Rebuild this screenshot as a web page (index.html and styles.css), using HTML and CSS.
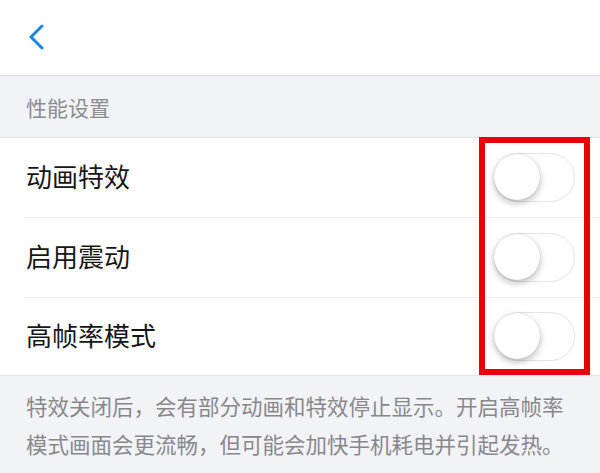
FILE: index.html
```html
<!DOCTYPE html>
<html lang="zh">
<head>
<meta charset="utf-8">
<link rel="stylesheet" href="styles.css">
</head>
<body>
<div class="page">
  <header class="nav">
    <svg class="back" width="18" height="26" viewBox="0 0 18 26"><path d="M15 2 L4 13 L15 24" fill="none" stroke="#1f86dc" stroke-width="3" stroke-linecap="round" stroke-linejoin="round"/></svg>
  </header>
  <div class="section-title">性能设置</div>
  <div class="list">
    <div class="row"><span class="label">动画特效</span><span class="toggle"><span class="knob"></span></span></div>
    <div class="row"><span class="label">启用震动</span><span class="toggle"><span class="knob"></span></span></div>
    <div class="row last"><span class="label">高帧率模式</span><span class="toggle"><span class="knob"></span></span></div>
  </div>
  <p class="note">特效关闭后，会有部分动画和特效停止显示。开启高帧率<br>模式画面会更流畅，但可能会加快手机耗电并引起发热。</p>
  <div class="highlight"></div>
</div>
</body>
</html>
```
FILE: styles.css
```css
html, body {
  margin: 0;
  padding: 0;
  background: #f2f3f7;
  font-family: "Noto Sans CJK SC", "Noto Sans", sans-serif;
}
.page {
  position: relative;
  width: 600px;
  height: 473px;
  overflow: hidden;
}
.nav {
  height: 75px;
  background: #fff;
  border-bottom: 1px solid #dedfe3;
  display: flex;
  align-items: center;
  padding-left: 27px;
}
.back {
  display: block;
  margin-top: -1px;
}
.section-title {
  height: 62px;
  box-sizing: border-box;
  padding-left: 26px;
  display: flex;
  align-items: center;
  font-size: 21px;
  color: #8c8c8e;
  border-bottom: 1px solid #e3e4e8;
}
.list {
  background: #fff;
  border-bottom: 1px solid #e3e4e8;
}
.row {
  height: 79px;
  margin-left: 24px;
  padding-right: 25px;
  display: flex;
  align-items: center;
  justify-content: space-between;
  border-bottom: 1px solid #ececee;
}
.row.last {
  border-bottom: none;
  height: 77px;
}
.label {
  font-size: 26px;
  color: #161616;
  padding-left: 2px;
  padding-bottom: 5px;
}
.toggle {
  position: relative;
  width: 79px;
  height: 47px;
  border: 1.5px solid #e4e4e6;
  border-radius: 25px;
  background: #fff;
}
.knob {
  position: absolute;
  left: -1px;
  top: 0px;
  width: 46px;
  height: 46px;
  border-radius: 50%;
  background: #fff;
  box-shadow: 0 3px 7px rgba(0,0,0,0.28), 0 0 1px rgba(0,0,0,0.2);
}
.note {
  margin: 0;
  padding: 11px 0 0 26px;
  font-size: 21.5px;
  line-height: 38px;
  color: #88888a;
}
.highlight {
  position: absolute;
  left: 479px;
  top: 137px;
  width: 111px;
  height: 238px;
  box-sizing: border-box;
  border: 6px solid #e9000a;
}
```
